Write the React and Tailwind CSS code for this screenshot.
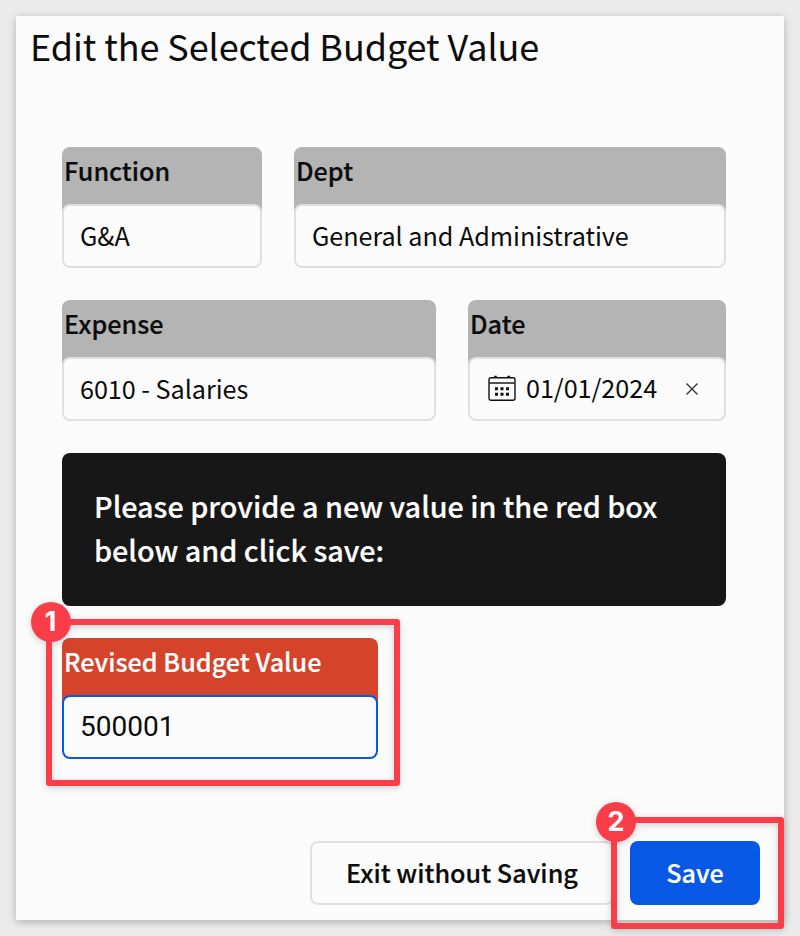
const sourceFont =
  "font-['Noto_Sans_CJK_SC','Open_Sans',sans-serif] text-[#0c0c0c]";
const semibold = "font-medium [-webkit-text-stroke:0.2px_currentColor]";

function CalendarIcon() {
  return (
    <svg width="28" height="28" viewBox="0 0 28 28" fill="none" stroke="#111111" className="relative -top-px shrink-0">
      <rect x="1" y="3.8" width="26" height="22.5" rx="2" strokeWidth="1.4" />
      <path d="M1 9H27" strokeWidth="1.7" stroke="#333333" />
      <path d="M7.5 1.8V4M20.7 1.8V4" strokeWidth="2.6" />
      <g fill="#111111" stroke="none">
        <path d="M7 13.3h3v3H7zM12.5 13.3h3v3h-3zM18 13.3h3v3h-3zM7 18.8h3v3H7zM12.5 18.8h3v3h-3zM18 18.8h3v3h-3z" />
      </g>
    </svg>
  );
}

function CloseIcon() {
  return (
    <svg width="12" height="12" viewBox="0 0 12 12" fill="none" stroke="#333333" strokeWidth="1.4" className="shrink-0">
      <path d="M.5.5l11 11M11.5.5l-11 11" />
    </svg>
  );
}

function Field({ label, className, children }) {
  return (
    <div className={`h-[121px] rounded-lg bg-gradient-to-b from-[#b4b4b4] from-[80px] to-[#fbfbfb] to-[80px] ${className}`}>
      <div className={`h-[57px] whitespace-nowrap pl-[2px] text-[25.2px] leading-[46px] ${semibold}`}>{label}</div>
      <div className="flex h-16 items-center whitespace-nowrap rounded-lg border-2 border-[#e0e0e0] bg-[#fbfbfb] pl-4 text-[25.2px] leading-[58px] tracking-[-0.05px]">
        <div className="h-[60px]">{children}</div>
      </div>
    </div>
  );
}

function Callout({ number, className, badge }) {
  return (
    <div className={`pointer-events-none absolute rounded-[3px] border-6 border-[#f93e4a] drop-shadow-[0_2px_3px_rgba(0,0,0,0.18)] ${className}`}>
      <span className={`absolute flex size-10 items-center justify-center rounded-full bg-[#f93e4a] font-['Inter',sans-serif] text-[27.5px] font-bold leading-none text-white ${badge}`}>
        {number}
      </span>
    </div>
  );
}

export default function App() {
  return (
    <div className={`relative h-[936px] w-[800px] overflow-hidden bg-[#ebebeb] p-4 ${sourceFont}`}>
      <main className="h-[904px] bg-[#fbfbfb] shadow-[0_2px_8px_rgba(0,0,0,0.25)]">
        <h1 className="h-[131px] whitespace-nowrap pl-[14px] text-[36px] leading-[58px] tracking-[-0.09px]">Edit the Selected Budget Value</h1>
        <div className="flex flex-col gap-8 pl-[46px] pr-[58px]">
          <div className="flex gap-8">
            <Field label="Function" className="w-[200px]">G&amp;A</Field>
            <Field label="Dept" className="flex-1">General and Administrative</Field>
          </div>
          <div className="flex gap-8">
            <Field label="Expense" className="w-[374px]">6010 - Salaries</Field>
            <Field label="Date" className="flex-1">
              <span className="flex h-[60px] items-center pl-[2px]">
                <CalendarIcon />
                <span className="ml-[10px] w-[160px] leading-[56px] pb-1">01/01/2024</span>
                <CloseIcon />
              </span>
            </Field>
          </div>
          <p className={`h-[153px] rounded-lg bg-[#171717] px-8 pt-[31px] text-[28.8px] leading-[44px] tracking-[-0.02px] text-white ${semibold}`}>
            Please provide a new value in the red box<br />below and click save:
          </p>
          <div className="h-[121px] w-[316px] rounded-lg bg-gradient-to-b from-[#d6432b] from-[80px] to-[#fbfbfb] to-[80px]">
            <div className={`h-[57px] whitespace-nowrap pl-[2px] text-[25.2px] leading-[46px] text-white ${semibold}`}>Revised Budget Value</div>
            <div className="flex h-16 items-center rounded-lg border-2 border-[#0758e5] bg-[#fbfbfb] pl-4 font-['Roboto',sans-serif] text-[28px]">500001</div>
          </div>
        </div>
        <div className="mt-[82px] flex justify-end gap-4 pr-6">
          <button className={`h-16 w-[304px] whitespace-nowrap rounded-lg border-2 border-[#e0e0e0] pb-[2px] text-[25.2px] leading-[58px] ${semibold}`}>Exit without Saving</button>
          <button className={`h-16 w-[130px] rounded-lg bg-[#0758e5] pb-[2px] text-[25.2px] leading-[62px] text-white ${semibold}`}>Save</button>
        </div>
      </main>
      <Callout number="1" className="left-[45.5px] top-[618.5px] h-[167.5px] w-[354.5px]" badge="-left-[21px] -top-[23px]" />
      <Callout number="2" className="left-[611px] top-[817px] h-[112px] w-[173px]" badge="-left-[21px] -top-[21.5px]" />
    </div>
  );
}
